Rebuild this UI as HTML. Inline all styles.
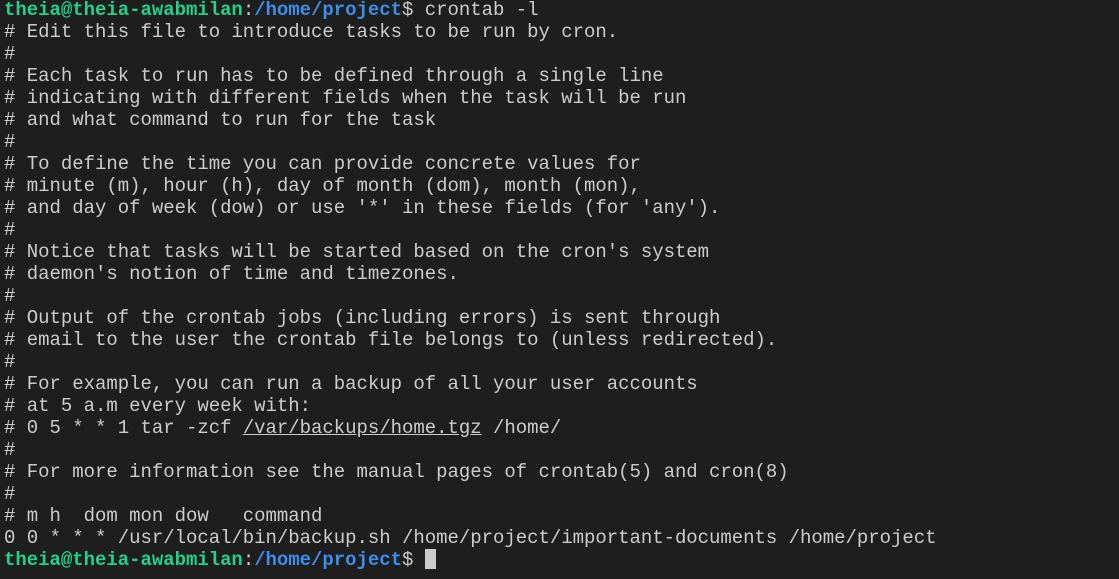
<!DOCTYPE html>
<html><head><meta charset="utf-8"><style>
html,body{margin:0;padding:0;background:#1e1e1e;width:1119px;height:579px;overflow:hidden}
pre{margin:0;position:absolute;left:4px;top:-1px;font-family:"Liberation Mono",monospace;font-size:19px;line-height:22px;color:#cccccc;letter-spacing:-0.03px;white-space:pre}
.g{color:#23d18b;font-weight:bold}.b{color:#3b8eea;font-weight:bold}
.u{text-decoration:underline}
.c{display:inline-block;width:11px;height:20px;background:#cccccc;vertical-align:-4px}
</style></head><body><pre><span class="g">theia@theia-awabmilan</span>:<span class="b">/home/project</span>$ crontab -l
# Edit this file to introduce tasks to be run by cron.
# 
# Each task to run has to be defined through a single line
# indicating with different fields when the task will be run
# and what command to run for the task
# 
# To define the time you can provide concrete values for
# minute (m), hour (h), day of month (dom), month (mon),
# and day of week (dow) or use '*' in these fields (for 'any').
# 
# Notice that tasks will be started based on the cron's system
# daemon's notion of time and timezones.
# 
# Output of the crontab jobs (including errors) is sent through
# email to the user the crontab file belongs to (unless redirected).
# 
# For example, you can run a backup of all your user accounts
# at 5 a.m every week with:
# 0 5 * * 1 tar -zcf <span class="u">/var/backups/home.tgz</span> /home/
# 
# For more information see the manual pages of crontab(5) and cron(8)
# 
# m h  dom mon dow   command
0 0 * * * /usr/local/bin/backup.sh /home/project/important-documents /home/project
<span class="g">theia@theia-awabmilan</span>:<span class="b">/home/project</span>$ <span class="c"></span></pre></body></html>
